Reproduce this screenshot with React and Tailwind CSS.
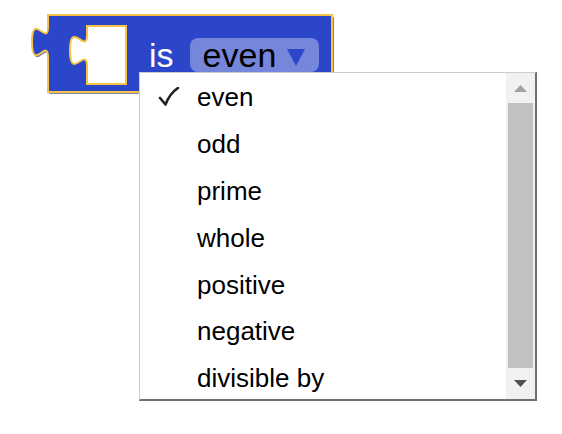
import React from "react";

const options = ["even", "odd", "prime", "whole", "positive", "negative", "divisible by"];

const Block = () => (
  <div className="absolute left-[28px] top-[14px] w-[308px] h-[82px]">
    <svg className="absolute inset-0" width="308" height="82" viewBox="0 0 308 82">
      <path
        d="M21,15 c0,20 -16,-16 -16,15 s16,-5 16,15 V80 H306 V3 H21 Z"
        fill="#7d84ad"
      />
      <path
        d="M20,13 c0,20 -16,-16 -16,15 s16,-5 16,15 V78 H304 V1 H20 Z"
        fill="#2b46c8"
        stroke="#f6c445"
        strokeWidth="2"
      />
      <path
        d="M59,21 c0,20 -17,-16 -17,15.5 s17,-5 17,15.5 V70 H98 V12 H59 Z"
        fill="#ffffff"
        stroke="#f6c445"
        strokeWidth="2"
      />
    </svg>
    <div className="relative flex items-center h-full pl-[121px] gap-[16px]">
      <span className="text-white text-[34px] leading-none">is</span>
      <div className="flex items-center h-[34px] w-[129px] rounded-[8px] bg-[#7686db] pl-[13px]">
        <span className="text-black text-[34px] leading-none">even</span>
        <svg className="ml-[11px] mt-[4px]" width="18" height="17" viewBox="0 0 18 17">
          <polygon points="0,0 18,0 9,17" fill="#2b46c8" />
        </svg>
      </div>
    </div>
  </div>
);

const Check = () => (
  <svg width="22" height="20" viewBox="0 0 22 20">
    <path
      d="M2,11 L7.5,17.5 C10,11 14,5 20,1"
      fill="none"
      stroke="#222222"
      strokeWidth="2.6"
      strokeLinecap="round"
      strokeLinejoin="round"
    />
  </svg>
);

const Menu = () => (
  <div className="absolute left-[139px] top-[72px] w-[398px] h-[329px] bg-white border-l border-t border-[#cccccc] border-r-2 border-b-2 border-r-[#707070] border-b-[#707070] flex">
    <div className="flex-1 overflow-hidden pt-[1px]">
      {options.map((o, i) => (
        <div key={o} className="flex items-center h-[46.8px]">
          <div className="w-[57px] flex justify-center pl-[1px]">{i === 0 && <Check />}</div>
          <span className="text-[26px] leading-none text-black">{o}</span>
        </div>
      ))}
    </div>
    <div className="w-[29px] bg-[#f1f1f1] flex flex-col">
      <div className="h-[30px] flex items-center justify-center">
        <svg width="13" height="7" viewBox="0 0 13 7">
          <polygon points="0,7 13,7 6.5,0" fill="#a3a3a3" />
        </svg>
      </div>
      <div className="flex-1 mx-[2px] bg-[#c1c1c1]" />
      <div className="h-[31px] flex items-center justify-center">
        <svg width="13" height="7" viewBox="0 0 13 7">
          <polygon points="0,0 13,0 6.5,7" fill="#505050" />
        </svg>
      </div>
    </div>
  </div>
);

export default function App() {
  return (
    <div
      className="relative w-[562px] h-[434px] bg-white overflow-hidden"
      style={{ fontFamily: '"Liberation Sans", Arial, sans-serif' }}
    >
      <Block />
      <Menu />
    </div>
  );
}
